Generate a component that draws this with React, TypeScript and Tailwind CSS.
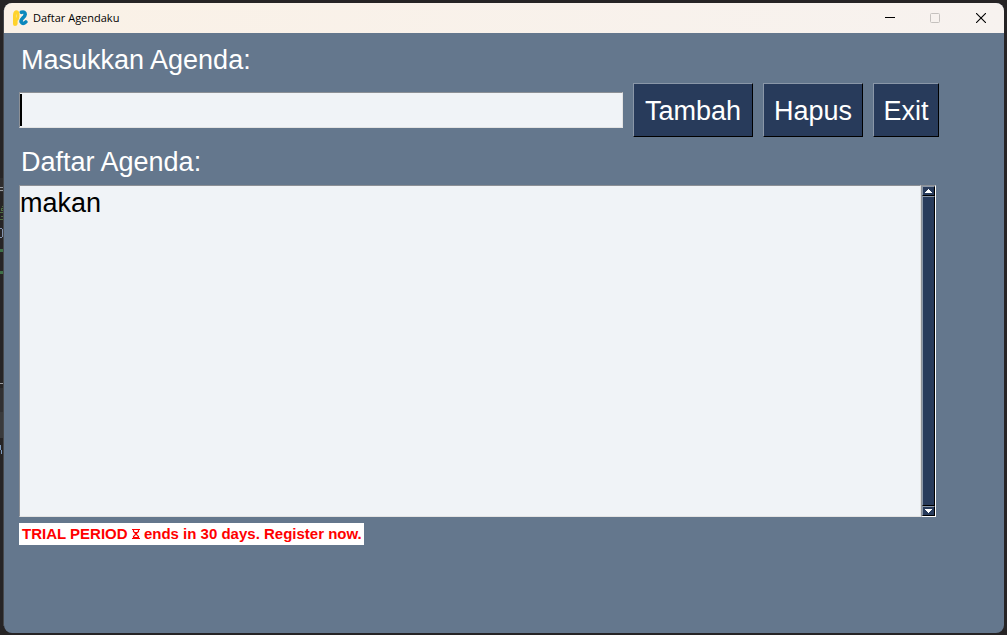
import { useState } from "react";

const raised =
  "border border-t-[#8a97a8] border-l-[#8a97a8] border-r-black border-b-black bg-[#283b5b]";

const buttonStyle = `${raised} h-[54px] pt-0.5 text-center text-[27px] leading-8 text-white`;

function Logo() {
  return (
    <svg className="size-4" viewBox="0 0 16 16" fill="none" aria-hidden="true">
      <path d="M1 5Q1.2.3 4.8.2Q7.7.6 7.5 5Q7.6 9.6 5.6 10.8V14Q5.2 16 3 16Q1 15.8 1 14Z" fill="#ffd32c" />
      <path d="M4.4 4.5V7.5" stroke="#f3dda0" strokeWidth=".8" />
      <path d="M9.4 2.3Q13.2 1.2 13.2 4.3Q13 6.4 10.8 8Q8.6 10 9.2 12Q10.6 14.8 13.8 12" stroke="#0b88bd" strokeWidth="3.6" strokeLinecap="round" />
    </svg>
  );
}

function Backdrop() {
  return (
    <svg className="h-full w-1 shrink-0" shapeRendering="crispEdges" aria-hidden="true">
      <path d="M0 178H3V192H0Z" fill="#2e2d2e" />
      <path d="M0 187.5H4M0 190.5H4M0 383.5H3" stroke="#9a9ca0" />
      <path d="M2 206H3V208H1V210H3M0 212H3M1 216H3V219H0" stroke="#4c6b42" fill="none" />
      <path d="M0 228Q3 228 3 232Q3 238 0 238" stroke="#8292ad" fill="none" />
      <path d="M0 249H3V252H0ZM0 271H3V274H0Z" fill="#3f7048" />
      <path d="M0 388H3V412H0Z" fill="#303032" />
      <path d="M0 412H3V438H0Z" fill="#393a3c" />
      <path d="M0 445L2 454" stroke="#7d9abe" />
      <path d="M3.5 10V626" stroke="#46484b" />
    </svg>
  );
}

function TitleBar() {
  return (
    <header className="flex h-[30px] items-center bg-linear-to-r from-[#faf1e6] to-[#f7f2ef] pl-2">
      <Logo />
      <h1 className="ml-[5px] flex-1 font-['Open_Sans','Noto_Sans',sans-serif] text-[11px] text-black">Daftar Agendaku</h1>
      <button aria-label="Minimize" className="flex h-full w-[45px] items-center justify-center">
        <svg className="size-2.5" viewBox="0 0 10 10" aria-hidden="true">
          <path d="M0 4.5H10" stroke="#000" />
        </svg>
      </button>
      <button aria-label="Maximize" disabled className="flex h-full w-[45px] items-center justify-center">
        <svg className="size-2.5" viewBox="0 0 10 10" fill="none" aria-hidden="true">
          <rect x=".5" y=".5" width="9" height="9" rx="1" stroke="#c5c1be" />
        </svg>
      </button>
      <button aria-label="Close" className="flex h-full w-[47px] items-center justify-center">
        <svg className="size-2.5" viewBox="0 0 10 10" aria-hidden="true">
          <path d="M0 0L10 10M10 0L0 10" stroke="#000" strokeWidth="1.1" />
        </svg>
      </button>
    </header>
  );
}

function Arrow({ d }: { d: string }) {
  return (
    <svg className="h-1 w-[7px]" viewBox="0 0 7 4" shapeRendering="crispEdges" aria-hidden="true">
      <path d={d} fill="#fff" />
    </svg>
  );
}

export default function App() {
  const [text, setText] = useState("");
  const [items, setItems] = useState(["makan"]);
  const [selected, setSelected] = useState(-1);

  const add = () => {
    if (!text.trim()) return;
    setItems([...items, text.trim()]);
    setText("");
  };
  const remove = () => {
    setItems(items.filter((_, i) => i !== selected));
    setSelected(-1);
  };

  return (
    <div className="flex h-screen bg-[#262425] pr-[3px] font-['Liberation_Sans',Arial,sans-serif]">
      <Backdrop />
      <div className="mt-[3px] mb-0.5 flex flex-1 flex-col overflow-hidden rounded-lg bg-[#64778d]">
        <TitleBar />
        <main className="flex flex-1 flex-col items-start pt-[11px] pr-16 pl-[15px]">
          <label htmlFor="agenda" className="px-0.5 text-[27px] leading-8 text-white">Masukkan Agenda:</label>
          <div className="mt-[7px] flex w-full items-center gap-2.5 pr-px">
            <div className="flex h-9 min-w-0 flex-1 border border-t-[#8c9096] border-r-[#e3e3e3] border-b-[#e3e3e3] border-l-[#8c9096] bg-[#f0f3f7]">
              <span className="my-px w-0.5 bg-black" />
              <input
                id="agenda"
                value={text}
                onChange={(e) => setText(e.target.value)}
                className="min-w-0 flex-1 bg-transparent text-[27px] leading-8 text-black caret-black outline-none"
              />
            </div>
            <button onClick={add} className={`${buttonStyle} w-[120px]`}>Tambah</button>
            <button onClick={remove} className={`${buttonStyle} w-[100px]`}>Hapus</button>
            <button className={`${buttonStyle} w-[66px]`}>Exit</button>
          </div>
          <h2 className="mt-[9px] px-0.5 text-[27px] leading-8 text-white">Daftar Agenda:</h2>
          <div className="mt-[7px] flex h-[332px] w-full pr-1">
            <ul className="flex-1 border border-t-[#8c9096] border-r-[#e3e3e3] border-b-[#e3e3e3] border-l-[#8c9096] bg-[#f0f3f7] pt-px text-[27px] leading-8 text-black">
              {items.map((item, i) => (
                <li key={i}>
                  <button
                    onClick={() => setSelected(i)}
                    className={i === selected ? "block w-full bg-[#283b5b] text-left text-white" : "block w-full text-left"}
                  >
                    {item}
                  </button>
                </li>
              ))}
            </ul>
            <div className="flex w-[15px] flex-col border border-t-[#8c9096] border-r-white border-b-white border-l-[#8c9096] bg-[#283b5b]">
              <button aria-label="Scroll up" className={`${raised} flex h-2.5 items-center justify-center`}>
                <Arrow d="M3 0h1v1h1v1h1v1h1v1H0V3h1V2h1V1h1z" />
              </button>
              <div className={`${raised} flex-1`} />
              <button aria-label="Scroll down" className={`${raised} flex h-2.5 items-center justify-center`}>
                <Arrow d="M0 0h7v1H6v1H5v1H4v1H3V3H2V2H1V1H0z" />
              </button>
            </div>
          </div>
          <p className="mt-1.5 h-[22px] bg-white pr-0.5 pl-[3px] text-[15px] leading-[22px] font-bold text-[#f00]">
            TRIAL PERIOD{" "}
            <svg className="inline h-2.5 w-2 align-baseline" viewBox="0 0 8 10" fill="none" role="img" aria-label="hourglass">
              <path d="M0 .5H8M0 9.5H8M1.5 .5V2.5L4 5L6.5 2.5V.5M1.5 9.5V7.5L4 5L6.5 7.5V9.5M2 8.5H6M3 3.5H5" stroke="#f00" strokeWidth="1.2" />
            </svg>{" "}
            ends in 30 days. Register now.
          </p>
        </main>
      </div>
    </div>
  );
}
